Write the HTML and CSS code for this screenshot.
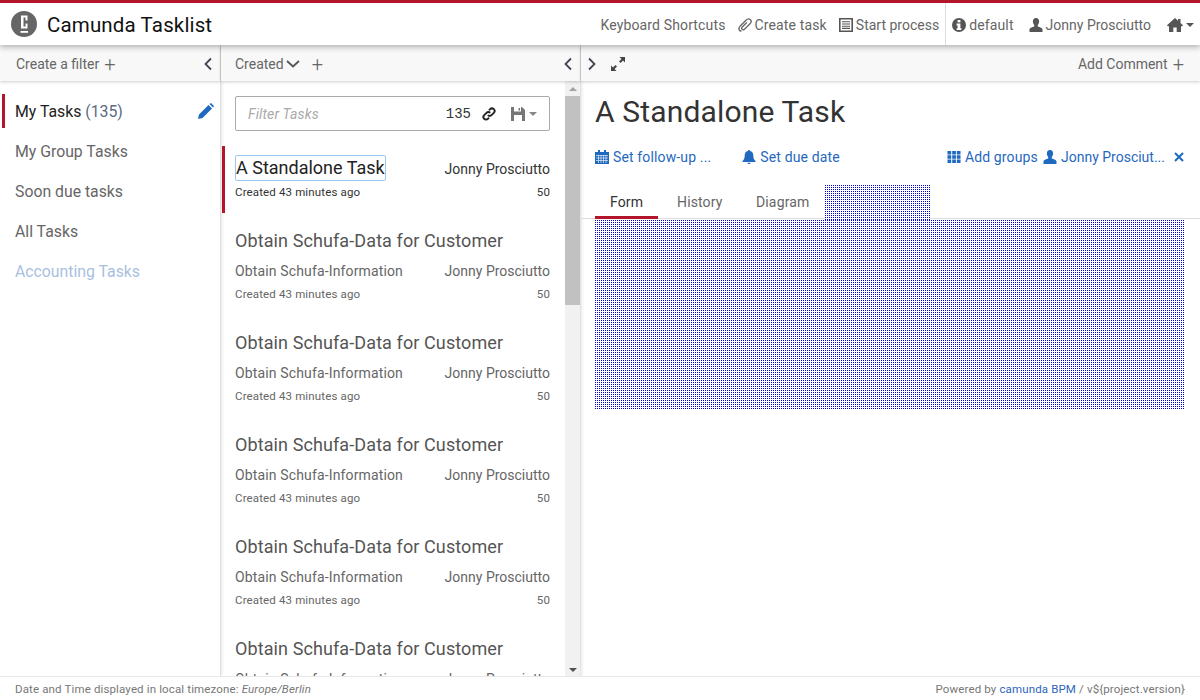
FILE: index.html
```html
<!DOCTYPE html>
<html>
<head>
  <title>Camunda Tasklist</title>
  <link rel="stylesheet" href="styles.css">
</head>
<body>
  <header class="topbar">
    <div class="brand">
      <svg class="logo" viewBox="0 0 26 26" width="26" height="26">
        <circle cx="13" cy="13" r="13" fill="#666"/>
        <path d="M10 4.500h6.500v5h-2v-3h-2v9h2v-3h2v5H10z" fill="#fff"/>
        <rect x="9.500" y="20" width="7.500" height="1.800" fill="#fff"/>
      </svg>
      <span class="brand-name">Camunda Tasklist</span>
    </div>
    <nav class="topnav">
      <a>Keyboard Shortcuts</a>
      <a>
        <svg class="ico" viewBox="0 0 14 14"><path d="M3.500 13.200c-1.700 0-2.900-1.500-2.500-3.200.2-.7.600-1.200 1-1.700L8 2.200c1.400-1.400 3.200-1.600 4.400-.5 1.100 1.100.9 2.800-.4 4.100L6.700 11c-.9.900-2 1-2.600.4-.6-.6-.5-1.700.4-2.600l4.300-4.300" fill="none" stroke="#666" stroke-width="1.300"/></svg>
        Create task
      </a>
      <a>
        <svg class="ico" viewBox="0 0 14 14"><path d="M.8 .8h12.400v12.400H.8z" fill="#fff" stroke="#555" stroke-width="1.600"/><path d="M3 3.800h8M3 6h8M3 8.200h8M3 10.400h8" stroke="#555" stroke-width="1.100"/></svg>
        <span class="tight">Start process</span>
      </a>
      <a class="nav-sep">
        <svg class="ico" viewBox="0 0 14 14"><circle cx="7" cy="7" r="7" fill="#555"/><rect x="5.600" y="2" width="2.800" height="2.400" fill="#fff"/><path d="M4.600 5.600h3.800v4.600h1v1.800H4.600v-1.800h1V7.400h-1z" fill="#fff"/></svg>
        default
      </a>
      <a>
        <svg class="ico" viewBox="0 0 14 14"><path d="M7 0c2.100 0 3.100 1.500 3.100 3.500 0 1.400-.6 2.600-1.300 3.400v1.500c1.800.7 4.700 1.300 4.700 3V14H.500v-2.600c0-1.700 2.900-2.300 4.700-3V6.900C4.500 6.100 3.900 4.900 3.900 3.500 3.900 1.500 4.900 0 7 0z" fill="#555"/></svg>
        <span class="tight">Jonny Prosciutto</span>
      </a>
      <a class="home">
        <svg class="ico home-ico" viewBox="0 0 16 14"><path d="M8 0l3 2.700V1h2.500v3.900L16 7.200l-.8 1H14V14H9.700V9.500H6.300V14H2V8.200H.8l-.8-1z" fill="#555"/></svg>
        <span class="caret"></span>
      </a>
    </nav>
  </header>

  <main class="columns">
    <section class="col-filters">
      <div class="col-head">
        <span class="head-link">Create a filter <span class="plus">+</span></span>
        <svg class="chev" viewBox="0 0 10 14"><path d="M8 1.500L2.500 7 8 12.500" fill="none" stroke="#445" stroke-width="1.800"/></svg>
      </div>
      <ul class="filters">
        <li class="filter active">
          <span>My Tasks <span class="count">(135)</span></span>
          <svg class="pencil" viewBox="0 0 16 16"><path d="M0 16l1-4.500L10.500 2l3.500 3.500L4.500 15z M11.500 1L13 0l3 3-1 1.500z" fill="#1f69bf"/></svg>
        </li>
        <li class="filter">My Group Tasks</li>
        <li class="filter">Soon due tasks</li>
        <li class="filter">All Tasks</li>
        <li class="filter muted">Accounting Tasks</li>
      </ul>
    </section>

    <section class="col-list">
      <div class="col-head">
        <span class="head-link">Created<svg class="down" viewBox="0 0 14 10"><path d="M1 2l6 5.500L13 2" fill="none" stroke="#555" stroke-width="1.800"/></svg><span class="plus list-plus">+</span></span>
        <svg class="chev" viewBox="0 0 10 14"><path d="M8 1.500L2.500 7 8 12.500" fill="none" stroke="#445" stroke-width="1.800"/></svg>
      </div>
      <div class="list-body">
        <div class="list-scroll">
          <div class="search">
            <span class="search-ph">Filter Tasks</span>
            <span class="search-count">135</span>
            <svg class="link-ico" viewBox="0 0 14 14"><path d="M5.800 8.200a2.600 2.600 0 0 0 3.700 0l2.300-2.300a2.600 2.600 0 0 0-3.700-3.700L7 3.300M8.200 5.800a2.600 2.600 0 0 0-3.700 0L2.200 8.100a2.600 2.600 0 0 0 3.700 3.700L7 10.700" fill="none" stroke="#222" stroke-width="1.900"/></svg>
            <svg class="save-ico" viewBox="0 0 14 14"><path d="M0 0h11l3 3v11H0z" fill="#777"/><rect x="3" y="0" width="7" height="4.500" fill="#fff"/><rect x="7.500" y="1" width="1.500" height="2.500" fill="#777"/><rect x="3" y="8" width="8" height="6" fill="#fff"/></svg>
            <span class="caret light"></span>
          </div>
          <article class="task current">
            <div class="task-top">
              <span class="task-name focus">A Standalone Task</span>
              <span class="assignee tight">Jonny Prosciutto</span>
            </div>
            <div class="task-meta"><span>Created 43 minutes ago</span><span>50</span></div>
          </article>
          <article class="task">
            <div class="task-name">Obtain Schufa-Data for Customer</div>
            <div class="task-mid"><span>Obtain Schufa-Information</span><span class="tight">Jonny Prosciutto</span></div>
            <div class="task-meta"><span>Created 43 minutes ago</span><span>50</span></div>
          </article>
          <article class="task">
            <div class="task-name">Obtain Schufa-Data for Customer</div>
            <div class="task-mid"><span>Obtain Schufa-Information</span><span class="tight">Jonny Prosciutto</span></div>
            <div class="task-meta"><span>Created 43 minutes ago</span><span>50</span></div>
          </article>
          <article class="task">
            <div class="task-name">Obtain Schufa-Data for Customer</div>
            <div class="task-mid"><span>Obtain Schufa-Information</span><span class="tight">Jonny Prosciutto</span></div>
            <div class="task-meta"><span>Created 43 minutes ago</span><span>50</span></div>
          </article>
          <article class="task">
            <div class="task-name">Obtain Schufa-Data for Customer</div>
            <div class="task-mid"><span>Obtain Schufa-Information</span><span class="tight">Jonny Prosciutto</span></div>
            <div class="task-meta"><span>Created 43 minutes ago</span><span>50</span></div>
          </article>
          <article class="task">
            <div class="task-name">Obtain Schufa-Data for Customer</div>
            <div class="task-mid"><span>Obtain Schufa-Information</span><span class="tight">Jonny Prosciutto</span></div>
            <div class="task-meta"><span>Created 43 minutes ago</span><span>50</span></div>
          </article>
        </div>
        <div class="scrollbar">
          <span class="arrow up"></span>
          <div class="track"><div class="thumb"></div></div>
          <span class="arrow dn"></span>
        </div>
      </div>
    </section>

    <section class="col-detail">
      <div class="col-head">
        <span class="head-icons">
          <svg class="chev" viewBox="0 0 10 14"><path d="M2 1.500L7.500 7 2 12.500" fill="none" stroke="#445" stroke-width="1.800"/></svg>
          <svg class="expand" viewBox="0 0 14 14"><path d="M8.500 0H14v5.500l-2-2-2.500 2.500-1.500-1.500L10.500 2z M0 14V8.500l2 2 2.500-2.500 1.500 1.500L3.500 12l2 2z" fill="#444"/></svg>
        </span>
        <span class="head-link">Add Comment <span class="plus">+</span></span>
      </div>
      <h1 class="detail-title">A Standalone Task</h1>
      <div class="actions">
        <div class="actions-left">
          <a>
            <svg class="ico" viewBox="0 0 14 14"><path d="M0 2h3V0h2v2h4V0h2v2h3v12H0z" fill="#1f69bf"/><path d="M1 5.500h12M1 8h12M1 10.500h12M3.500 5v8M6 5v8M8.500 5v8M11 5v8" stroke="#fff" stroke-width=".6"/></svg>
            Set follow-up ...
          </a>
          <a>
            <svg class="ico" viewBox="0 0 14 14"><path d="M7 0c.6 0 1 .4 1 1 2.300.5 3.300 2.200 3.300 4.500 0 2.800.7 4 2.200 5.500v1H.500v-1C2 9.500 2.700 8.300 2.700 5.500 2.700 3.200 3.700 1.500 6 1c0-.6.400-1 1-1zM5.500 12.800h3C8.500 13.600 7.800 14 7 14s-1.500-.4-1.500-1.200z" fill="#1f69bf"/></svg>
            Set due date
          </a>
        </div>
        <div class="actions-right">
          <a>
            <svg class="ico" viewBox="0 0 14 14"><path d="M.500 1h3.700v3.500H.500zM5.200 1h3.700v3.500H5.200zM9.800 1h3.700v3.500H9.800zM.500 5.300h3.700v3.500H.500zM5.200 5.300h3.700v3.500H5.200zM9.800 5.300h3.700v3.500H9.800zM.500 9.600h3.700v3.500H.500zM5.200 9.600h3.700v3.500H5.200zM9.800 9.600h3.700v3.500H9.800z" fill="#1f69bf"/></svg>
            Add groups
          </a>
          <a>
            <svg class="ico" viewBox="0 0 14 14"><path d="M7 0c2.100 0 3.100 1.500 3.100 3.500 0 1.400-.6 2.600-1.300 3.400v1.500c1.800.7 4.700 1.300 4.700 3V14H.500v-2.600c0-1.700 2.900-2.300 4.700-3V6.900C4.500 6.100 3.900 4.900 3.900 3.500 3.900 1.500 4.900 0 7 0z" fill="#1f69bf"/></svg>
            <span class="tight">Jonny Prosciut...</span>
          </a>
          <svg class="close" viewBox="0 0 10 10"><path d="M1 1l8 8M9 1l-8 8" stroke="#1f69bf" stroke-width="2"/></svg>
        </div>
      </div>
      <div class="tabs">
        <span class="tab active">Form</span>
        <span class="tab">History</span>
        <span class="tab">Diagram</span>
        <div class="dots tab-dots"></div>
      </div>
      <div class="dots form-dots"></div>
    </section>
  </main>

  <footer class="footer">
    <span>Date and Time displayed in local timezone: <em>Europe/Berlin</em></span>
    <span>Powered by <a>camunda BPM</a> / v${project.version}</span>
  </footer>
</body>
</html>
```

FILE: styles.css
```css
* {
  box-sizing: border-box;
}

html,
body {
  height: 100%;
}

body {
  margin: 0;
  font-family: Roboto, "Noto Sans", sans-serif;
  font-size: 14px;
  letter-spacing: 0.01em;
  color: #333;
  background-color: #fff;
  display: flex;
  flex-direction: column;
  overflow: hidden;
}

a {
  color: inherit;
}

ul {
  list-style: none;
  margin: 0;
  padding: 0;
}

.tight {
  letter-spacing: 0;
}

.topbar {
  height: 45px;
  flex: none;
  display: flex;
  justify-content: space-between;
  background-color: #fff;
  border-top: 3px solid #b5152b;
  box-shadow: 0 2px 6px rgba(0, 0, 0, 0.3);
  position: relative;
  z-index: 3;
}

.brand {
  display: flex;
  align-items: center;
  padding-left: 11px;
  gap: 10px;
}

.brand-name {
  font-size: 20.500px;
  padding-top: 2px;
  color: #111;
}

.topnav {
  display: flex;
  align-items: stretch;
  color: #666;
}

.topnav a {
  display: flex;
  align-items: center;
  gap: 3px;
  padding-top: 2px;
  margin-right: 12px;
}

.topnav a.nav-sep {
  border-left: 1px solid #ddd;
  padding-left: 6px;
  margin-left: -6px;
  margin-right: 15px;
}

.topnav a.home {
  margin-left: 4px;
  margin-right: 6px;
}

.ico {
  width: 14px;
  height: 14px;
  flex: none;
}

.home-ico {
  width: 16px;
}

.caret {
  width: 0;
  height: 0;
  border-left: 4px solid transparent;
  border-right: 4px solid transparent;
  border-top: 4px solid #555;
}

.caret.light {
  border-top-color: #888;
  margin-left: 4px;
}

.columns {
  flex: 1;
  min-height: 0;
  display: flex;
}

.col-filters {
  width: 221px;
  flex: none;
  border-right: 1px solid #e4e4e4;
  box-shadow: 1px 0 3px rgba(0, 0, 0, 0.1);
}

.col-list {
  width: 360px;
  flex: none;
  display: flex;
  flex-direction: column;
  border-right: 1px solid #e4e4e4;
  box-shadow: 1px 0 3px rgba(0, 0, 0, 0.1);
}

.col-detail {
  flex: 1;
  min-width: 0;
}

.col-head {
  height: 36px;
  display: flex;
  align-items: center;
  justify-content: space-between;
  padding: 1px 7px 0 16px;
  background-color: #f8f8f8;
  color: #666;
  box-shadow: 0 1px 3px rgba(0, 0, 0, 0.2);
  position: relative;
}

.col-list .col-head {
  padding-left: 14px;
}

.col-detail .col-head {
  padding: 1px 16px 0 6px;
}

.head-link {
  display: flex;
  align-items: center;
  gap: 5px;
  letter-spacing: 0;
}

.head-icons {
  display: flex;
  align-items: center;
  gap: 14px;
}

.plus {
  font-size: 20px;
  font-weight: 300;
  line-height: 14px;
}

.list-plus {
  margin-left: 7px;
}

.chev {
  width: 10px;
  height: 14px;
}

.down {
  width: 14px;
  height: 10px;
  margin-left: -3px;
}

.expand {
  width: 14px;
  height: 14px;
}

.filters {
  padding-top: 10px;
}

.filter {
  height: 40px;
  padding: 0 6px 0 10px;
  margin-left: 2px;
  display: flex;
  align-items: center;
  justify-content: space-between;
  font-size: 15.800px;
  letter-spacing: 0;
  color: #666;
  border-left: 3px solid transparent;
}

.filter.active {
  height: 34px;
  margin-top: 3px;
  margin-bottom: 3px;
  color: #222;
  border-left-color: #b5152b;
}

.filter.muted {
  color: #a9bfe0;
}

.count {
  color: #5a6a80;
}

.pencil {
  width: 16px;
  height: 16px;
}

.list-body {
  flex: 1;
  min-height: 0;
  display: flex;
}

.list-scroll {
  flex: 1;
  min-width: 0;
  overflow: hidden;
  padding-top: 15px;
}

.search {
  height: 35px;
  margin: 0 15px 0 14px;
  border: 1px solid #aaa;
  border-radius: 2px;
  display: flex;
  align-items: center;
  padding: 0 12px 0 12px;
}

.search-ph {
  flex: 1;
  color: #aaa;
  font-style: italic;
}

.search-count {
  font-family: "Liberation Mono", monospace;
  letter-spacing: 0;
  margin-right: 11px;
  color: #333;
}

.link-ico {
  width: 14px;
  height: 14px;
  margin-right: 15px;
}

.save-ico {
  width: 14px;
  height: 14px;
}

.task {
  padding: 12px 15px 0 14px;
  height: 102px;
}

.task.current {
  height: 67px;
  margin-top: 15px;
  margin-bottom: 4px;
  margin-left: 1px;
  padding: 9px 15px 0 10px;
  border-left: 3px solid #b5152b;
}

.task-top {
  display: flex;
  justify-content: space-between;
  align-items: center;
}

.task-name {
  font-size: 18px;
  line-height: 24px;
  letter-spacing: 0.1px;
  color: #555;
}

.task-name.focus {
  color: #222;
  letter-spacing: 0;
  border: 1px solid #9ec5ea;
  border-radius: 2px;
  white-space: nowrap;
}

.assignee {
  color: #333;
  padding-top: 2px;
}

.task-mid {
  display: flex;
  justify-content: space-between;
  margin-top: 7px;
  line-height: 22px;
  color: #666;
}

.task-meta {
  display: flex;
  justify-content: space-between;
  margin-top: 2px;
  font-size: 11.500px;
  line-height: 20px;
  color: #666;
}

.current .task-meta {
  color: #333;
  margin-top: 1px;
}

.scrollbar {
  width: 15px;
  flex: none;
  background-color: #f1f1f1;
  display: flex;
  flex-direction: column;
  align-items: center;
}

.track {
  flex: 1;
  width: 100%;
  margin-top: 5px;
}

.thumb {
  height: 209px;
  background-color: #c1c1c1;
}

.arrow {
  width: 0;
  height: 0;
  border-left: 4px solid transparent;
  border-right: 4px solid transparent;
}

.arrow.up {
  margin-top: 6px;
  border-bottom: 4px solid #a3a3a3;
}

.arrow.dn {
  margin-top: 4px;
  border-top: 4px solid #505050;
  margin-bottom: 4px;
}

.detail-title {
  margin: 0;
  padding: 12px 0 0 14px;
  font-size: 30px;
  line-height: 38px;
  letter-spacing: 0.15px;
  font-weight: 400;
  color: #333;
}

.actions {
  display: flex;
  justify-content: space-between;
  padding: 0 16px 0 14px;
  margin-top: 16px;
  line-height: 20px;
  color: #1f69bf;
}

.actions a {
  display: inline-flex;
  align-items: center;
  gap: 4px;
}

.actions-left {
  display: flex;
  gap: 31px;
}

.actions-right {
  display: flex;
  align-items: center;
  gap: 5px;
}

.close {
  width: 10px;
  height: 10px;
  margin-left: 4px;
}

.tabs {
  height: 42px;
  margin-top: 10px;
  display: grid;
  grid-template-columns: 63px 79px 88px 105px;
  padding-left: 14px;
  border-bottom: 1px solid #ddd;
  color: #666;
}

.tab {
  height: 42px;
  padding: 17px 0 0 19px;
  border-bottom: 3px solid transparent;
}

.tab.active {
  color: #333;
  border-bottom-color: #b5152b;
  padding: 17px 0 0 15px;
}

.dots {
  background-color: #fff;
  background-image:
    linear-gradient(90deg, transparent 50%, #fff 50%),
    linear-gradient(#00c 50%, #fff 50%);
  background-size: 2px 2px;
}

.tab-dots {
  height: 35px;
  align-self: end;
  margin-bottom: -1px;
}

.form-dots {
  width: 589px;
  height: 189px;
  margin-left: 14px;
  margin-top: 1px;
}

.footer {
  height: 24px;
  flex: none;
  display: flex;
  justify-content: space-between;
  align-items: center;
  padding: 1px 15px 0;
  font-size: 11.500px;
  color: #777;
  background-color: #fff;
  border-top: 1px solid #e8e8e8;
  position: relative;
}

.footer a {
  color: #2a66bd;
}
```
